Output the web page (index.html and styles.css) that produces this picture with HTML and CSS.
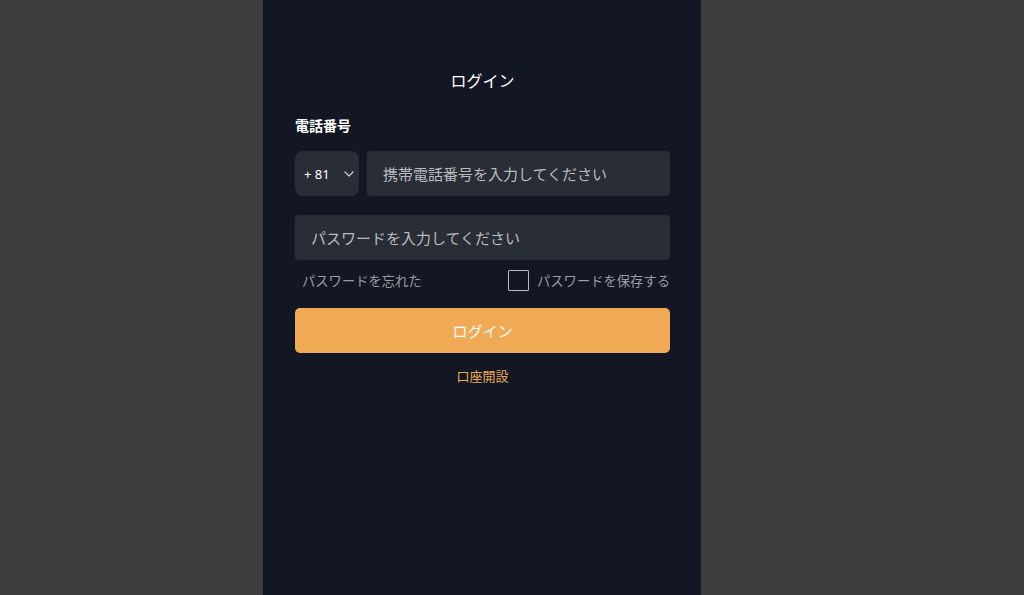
FILE: index.html
```html
<!DOCTYPE html>
<html lang="ja">
<head>
    <meta charset="UTF-8">
    <meta name="viewport" content="width=device-width, initial-scale=1.0">
    <title>ログイン</title>
    <link rel="stylesheet" href="styles.css">
</head>
<body>
    <div class="page">
        <h1 class="title">ログイン</h1>

        <div class="form">
            <label class="field-label">電話番号</label>

            <div class="phone-row">
                <div class="code-select">
                    <span>+ 81</span>
                    <svg class="chevron" width="10" height="6" viewBox="0 0 10 6">
                        <path d="M1 1l4 4 4-4" fill="none" stroke="#c8cad0" stroke-width="1.3" stroke-linecap="round" stroke-linejoin="round"/>
                    </svg>
                </div>
                <input class="text-input" type="tel" placeholder="携帯電話番号を入力してください">
            </div>

            <input class="text-input pwd-input" type="password" placeholder="パスワードを入力してください">

            <div class="options-row">
                <a href="#" class="forgot">パスワードを忘れた</a>
                <label class="remember">
                    <span class="checkbox"></span>
                    <span>パスワードを保存する</span>
                </label>
            </div>

            <button class="login-btn">ログイン</button>

            <a href="#" class="register">口座開設</a>
        </div>
    </div>
</body>
</html>
```

FILE: styles.css
```css
:root {
    --outer-bg: #3d3d3d;
    --panel-bg: #121723;
    --input-bg: #292d36;
    --accent: #f0aa55;
    --muted: #9a9ca3;
}

* {
    box-sizing: border-box;
    margin: 0;
    padding: 0;
}

body {
    font-family: 'Noto Sans', 'Noto Sans CJK JP', sans-serif;
    background-color: var(--outer-bg);
    color: #fff;
    height: 595px;
    overflow: hidden;
}

.page {
    width: 438px;
    height: 595px;
    margin: 0 0 0 263px;
    background-color: var(--panel-bg);
    padding: 70px 31px 0 32px;
}

.title {
    text-align: center;
    font-size: 16px;
    font-weight: 400;
    line-height: 22px;
    margin-bottom: 24px;
}

.form {
    display: flex;
    flex-direction: column;
}

.field-label {
    font-size: 14px;
    font-weight: 700;
    line-height: 20px;
    margin-bottom: 15px;
}

.phone-row {
    display: flex;
    gap: 8px;
    margin-bottom: 19px;
}

.code-select {
    width: 64px;
    height: 45px;
    flex-shrink: 0;
    background-color: var(--input-bg);
    border-radius: 8px;
    display: flex;
    align-items: center;
    justify-content: space-between;
    padding: 0 4px 0 9px;
    font-size: 13px;
}

.chevron {
    margin-right: 1px;
}

.text-input {
    flex: 1;
    height: 45px;
    border: none;
    outline: none;
    border-radius: 4px;
    background-color: var(--input-bg);
    color: #fff;
    font-family: inherit;
    font-size: 15px;
    padding: 0 16px;
}

.text-input::placeholder {
    color: #b9bbc0;
}

.pwd-input {
    width: 100%;
    flex: none;
}

.options-row {
    display: flex;
    justify-content: space-between;
    align-items: center;
    height: 20px;
    margin: 10px 0 18px;
    font-size: 13.3px;
    color: var(--muted);
}

.forgot {
    color: var(--muted);
    text-decoration: none;
    padding-left: 7px;
}

.remember {
    display: flex;
    align-items: center;
    gap: 8px;
}

.checkbox {
    width: 21px;
    height: 21px;
    border: 1.5px solid #b9bbc0;
    border-radius: 1px;
}

.login-btn {
    height: 45px;
    border: none;
    border-radius: 5px;
    background-color: var(--accent);
    color: #fff;
    font-family: inherit;
    font-size: 15px;
    cursor: pointer;
}

.register {
    align-self: center;
    margin-top: 13px;
    color: var(--accent);
    text-decoration: none;
    font-size: 13px;
    line-height: 20px;
}
```
